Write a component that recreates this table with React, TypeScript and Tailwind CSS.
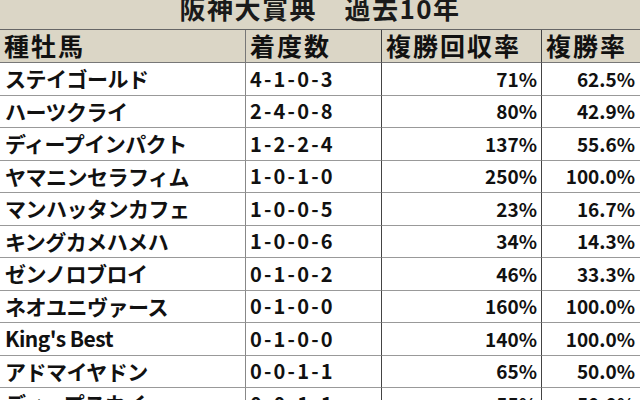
const rows = [
  ["ステイゴールド", "4-1-0-3", "71%", "62.5%"],
  ["ハーツクライ", "2-4-0-8", "80%", "42.9%"],
  ["ディープインパクト", "1-2-2-4", "137%", "55.6%"],
  ["ヤマニンセラフィム", "1-0-1-0", "250%", "100.0%"],
  ["マンハッタンカフェ", "1-0-0-5", "23%", "16.7%"],
  ["キングカメハメハ", "1-0-0-6", "34%", "14.3%"],
  ["ゼンノロブロイ", "0-1-0-2", "46%", "33.3%"],
  ["ネオユニヴァース", "0-1-0-0", "160%", "100.0%"],
  ["King's Best", "0-1-0-0", "140%", "100.0%"],
  ["アドマイヤドン", "0-0-1-1", "65%", "50.0%"],
  ["ディープスカイ", "0-0-1-1", "55%", "50.0%"],
];

const font = { fontFamily: '"Noto Sans CJK JP", "Noto Sans", sans-serif' };

export default function App() {
  return (
    <div className="h-[400px] w-[640px] overflow-hidden bg-white text-[#111]" style={font}>
      <div className="h-[29px] overflow-hidden bg-[#dbd6c6] text-center">
        <div className="-mt-[5px] text-[26px] font-bold leading-[26px] tracking-[1.5px] text-[#1a1a1a]">
          阪神大賞典　過去10年
        </div>
      </div>
      <div className="grid grid-cols-[246px_136px_160px_98px] border-t border-[#666]">
        <div className="flex h-[33px] items-center border-b border-r border-b-[#777] border-r-[#777] bg-[#dbd6c6] pl-[4px] text-[25px] font-bold tracking-[2px]">
          種牡馬
        </div>
        <div className="flex h-[33px] items-center border-b border-r border-b-[#777] border-r-[#444] bg-[#dbd6c6] pl-[4px] text-[25px] font-bold tracking-[2px]">
          着度数
        </div>
        <div className="flex h-[33px] items-center border-b border-r border-b-[#777] border-r-[#444] bg-[#dbd6c6] pl-[4px] text-[25px] font-bold tracking-[2px]">
          複勝回収率
        </div>
        <div className="flex h-[33px] items-center border-b border-b-[#777] bg-[#dbd6c6] pl-[4px] text-[25px] font-bold tracking-[2px]">
          複勝率
        </div>
        {rows.map((r, i) => (
          <div key={i} className="contents">
            <div className="flex h-[32.5px] items-center whitespace-nowrap border-b border-r border-b-[#999] border-r-[#888] pl-[5px] text-[21px] font-bold tracking-[-0.5px]">
              {r[0]}
            </div>
            <div className="flex h-[32.5px] items-center border-b border-r border-b-[#999] border-r-[#444] pl-[4px] text-[20px] font-bold tracking-[2.2px]">
              {r[1]}
            </div>
            <div className="flex h-[32.5px] items-center justify-end border-b border-r border-b-[#999] border-r-[#444] pr-[4px] text-[19px] font-bold">
              {r[2]}
            </div>
            <div className="flex h-[32.5px] items-center justify-end border-b border-b-[#999] pr-[5px] text-[19px] font-bold">
              {r[3]}
            </div>
          </div>
        ))}
      </div>
    </div>
  );
}
